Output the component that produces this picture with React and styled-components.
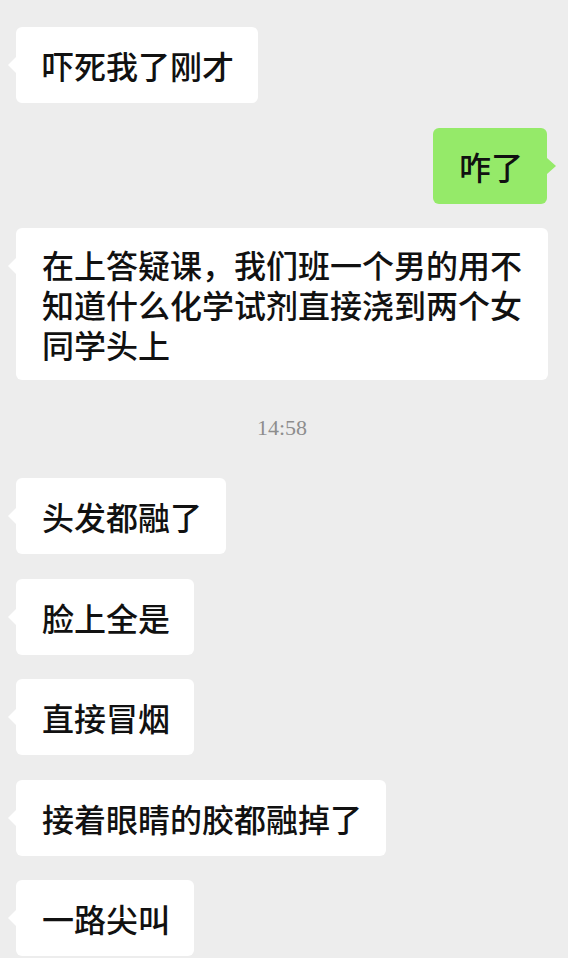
import styled, { createGlobalStyle } from "styled-components";

const GlobalStyle = createGlobalStyle`
	html, body {
		margin: 0;
		padding: 0;
		background: #ededed;
	}
	body {
		font-family: "Noto Sans CJK SC", "Noto Sans", sans-serif;
	}
`;

const Chat = styled.main`
	width: 568px;
	height: 958px;
	overflow: hidden;
	box-sizing: border-box;
	padding: 27px 20px 0 16px;
	display: flex;
	flex-direction: column;
	gap: 24.5px;
	background: #ededed;
`;

const Row = styled.div`
	display: flex;
	justify-content: ${(props) => (props.mine ? "flex-end" : "flex-start")};
	padding-right: ${(props) => (props.mine ? "1px" : "0")};
`;

const Bubble = styled.div`
	position: relative;
	box-sizing: border-box;
	min-height: 76px;
	max-width: 532px;
	padding: 16px 24px 16px 26px;
	display: flex;
	align-items: center;
	border-radius: 6px;
	background: ${(props) => (props.mine ? "#95ea69" : "#ffffff")};
	color: #111111;
	font-size: 32px;
	font-weight: 500;
	line-height: 40px;

	&::before {
		content: "";
		position: absolute;
		top: 30px;
		width: 0;
		height: 0;
		border-top: 8px solid transparent;
		border-bottom: 8px solid transparent;
		${(props) =>
			props.mine
				? `right: -9px; border-left: 9px solid #95ea69;`
				: `left: -8px; border-right: 8px solid #ffffff;`}
	}
`;

const Text = styled.p`
	margin: 0;
	max-width: 482px;
	word-break: break-all;
`;

const Time = styled.div`
	height: 49px;
	box-sizing: border-box;
	padding-top: 12px;
	text-align: center;
	font-family: "Liberation Serif", "Times New Roman", serif;
	font-size: 22px;
	line-height: 22px;
	color: #8d8d8d;
`;

const messages = [
	{ text: "吓死我了刚才" },
	{ text: "咋了", mine: true },
	{ text: "在上答疑课，我们班一个男的用不知道什么化学试剂直接浇到两个女同学头上" },
	{ time: "14:58" },
	{ text: "头发都融了" },
	{ text: "脸上全是" },
	{ text: "直接冒烟" },
	{ text: "接着眼睛的胶都融掉了" },
	{ text: "一路尖叫" },
];

const App = () => {
	return (
		<>
			<GlobalStyle />
			<Chat>
				{messages.map((m, i) =>
					m.time ? (
						<Time key={i}>{m.time}</Time>
					) : (
						<Row key={i} mine={m.mine}>
							<Bubble mine={m.mine}>
								<Text>{m.text}</Text>
							</Bubble>
						</Row>
					)
				)}
			</Chat>
		</>
	);
};

export default App;
